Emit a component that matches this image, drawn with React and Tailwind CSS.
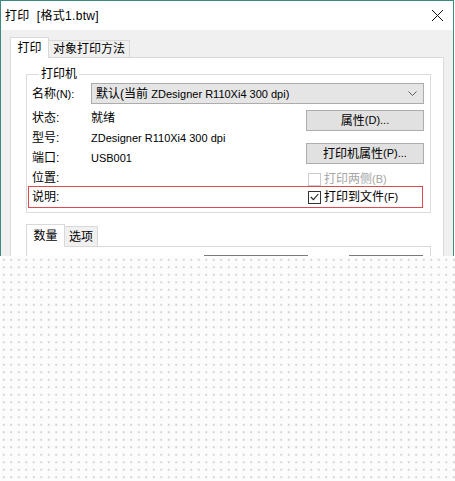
import React from "react";

function Latin({ children }) {
  return <span className="text-[11px]">{children}</span>;
}

function WinButton({ children }) {
  return (
    <div className="h-[21px] w-[118px] bg-[#e1e1e1] border border-[#adadad] flex items-center justify-center text-[12px] leading-none">
      {children}
    </div>
  );
}

function Checkbox({ checked, disabled, children }) {
  return (
    <div className="flex items-center h-[14px]">
      <span
        className={`w-[13px] h-[13px] border bg-white flex items-center justify-center ${
          disabled ? "border-[#cccccc]" : "border-[#333333]"
        }`}
      >
        {checked ? (
          <svg width="9" height="8" viewBox="0 0 9 8">
            <path d="M0.8 4 L3.4 6.6 L8.3 1" fill="none" stroke="#222" strokeWidth="1.1" />
          </svg>
        ) : null}
      </span>
      <span className={`ml-[3px] text-[12px] leading-[14px] ${disabled ? "text-[#a6a6a6]" : "text-black"}`}>
        {children}
      </span>
    </div>
  );
}

function InfoRow({ label, value }) {
  return (
    <div className="h-[20px] flex items-center text-[12px]">
      <span className="w-[59px]">{label}</span>
      <span>{value}</span>
    </div>
  );
}

export default function App() {
  return (
    <div className="w-[455px] h-[481px] flex flex-col bg-white overflow-hidden text-black font-['Liberation_Sans','Noto_Sans_CJK_SC',sans-serif]">
      {/* dialog */}
      <div className="h-[256px] w-[454px] shrink-0 border-x border-t border-[#3c8a80] flex flex-col overflow-hidden">
        <div className="h-[29px] shrink-0 bg-white flex items-center justify-between pl-[4px] pr-[9px]">
          <span className="text-[12px] tracking-[0.3px]">
            打印&nbsp; [格式1.btw]
          </span>
          <svg width="13" height="13" viewBox="0 0 13 13">
            <path d="M1 1 L12 12 M12 1 L1 12" stroke="#111" strokeWidth="1" fill="none" />
          </svg>
        </div>

        <div className="flex-1 bg-[#f0f0f0] px-[9px] pt-[7px] flex flex-col">
          {/* tabs */}
          <div className="flex items-end h-[20px] shrink-0">
            <div className="w-[39px] h-[21px] -mb-px relative z-10 bg-white border border-b-0 border-[#d9d9d9] flex items-center justify-center text-[12px]">
              打印
            </div>
            <div className="w-[81px] h-[17px] border border-l-0 border-b-0 border-[#d9d9d9] bg-[#f0f0f0] flex items-center justify-center text-[12px]">
              对象打印方法
            </div>
          </div>

          <div className="flex-1 bg-white border border-b-0 border-[#d9d9d9] pl-[15px] pt-[8px]">
            <fieldset className="w-[405px] border border-[#dcdcdc] pl-[5px] pb-[4px]">
              <legend className="ml-[7px] px-[2px] text-[12px] leading-[16px]">打印机</legend>

              <div className="flex items-center mt-[1px] h-[21px] text-[12px]">
                <span className="w-[59px]">
                  名称<Latin>(N):</Latin>
                </span>
                <div className="w-[333px] h-[21px] bg-[#e5e5e5] border border-[#acacac] flex items-center justify-between pl-[4px] pr-[6px]">
                  <span>
                    默认(当前 <Latin>ZDesigner R110Xi4 300 dpi)</Latin>
                  </span>
                  <svg width="9" height="5" viewBox="0 0 9 5">
                    <path d="M0.5 0.5 L4.5 4.5 L8.5 0.5" stroke="#606060" strokeWidth="1" fill="none" />
                  </svg>
                </div>
              </div>

              <div className="flex h-[82px]">
                <div className="w-[274px] pt-[4px]">
                  <InfoRow label="状态:" value="就绪" />
                  <InfoRow label="型号:" value={<Latin>ZDesigner R110Xi4 300 dpi</Latin>} />
                  <InfoRow label="端口:" value={<Latin>USB001</Latin>} />
                  <InfoRow label="位置:" value="" />
                </div>
                <div className="flex flex-col pt-[6px]">
                  <WinButton>
                    属性<Latin>(D)...</Latin>
                  </WinButton>
                  <div className="mt-[12px]">
                    <WinButton>
                      打印机属性<Latin>(P)...</Latin>
                    </WinButton>
                  </div>
                  <div className="mt-[8px] ml-[2px]">
                    <Checkbox disabled>
                      打印两侧<Latin>(B)</Latin>
                    </Checkbox>
                  </div>
                </div>
              </div>

              <div className="-ml-[4px] w-[395px] h-[22px] border border-[#dc4a4f] flex items-center">
                <span className="w-[279px] pl-[3px] text-[12px]">说明:</span>
                <Checkbox checked>
                  打印到文件<Latin>(F)</Latin>
                </Checkbox>
              </div>
            </fieldset>

            {/* sub tabs */}
            <div className="flex items-end h-[23px] mt-[10px]">
              <div className="w-[39px] h-[23px] -mb-px relative z-10 bg-white border border-b-0 border-[#d9d9d9] flex items-center justify-center text-[12px]">
                数量
              </div>
              <div className="w-[33px] h-[20px] border border-l-0 border-b-0 border-[#d9d9d9] bg-[#f0f0f0] flex items-center justify-center text-[12px]">
                选项
              </div>
            </div>
            <div className="w-[405px] h-[20px] border border-b-0 border-[#d9d9d9] pt-[8px] flex">
              <div className="ml-[177px] w-[104px] border-t border-[#7a7a7a]" />
              <div className="ml-[41px] w-[74px] border-t border-[#7a7a7a]" />
            </div>
          </div>
        </div>
      </div>

      {/* dotted backdrop */}
      <div className="flex-1 bg-[#fcfcfc] bg-[radial-gradient(circle,#d2d2d2_0.7px,transparent_1.2px)] bg-size-[7.5px_7.5px]" />
    </div>
  );
}
